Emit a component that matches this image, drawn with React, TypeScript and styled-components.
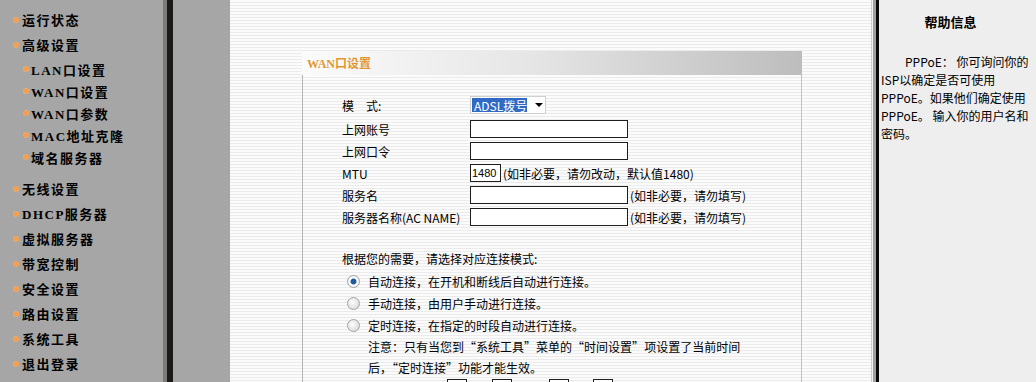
import React from 'react';
import styled, { createGlobalStyle } from 'styled-components';

const GlobalStyle = createGlobalStyle`
  html, body {
    margin: 0;
    padding: 0;
  }
  body {
    width: 1036px;
    height: 382px;
    overflow: hidden;
    background: #a6a6a6;
    font-family: "Noto Sans CJK SC", sans-serif;
    color: #000;
  }
`;

const Page = styled.div`
  display: flex;
  height: 382px;
  overflow: hidden;
`;

/* 左侧菜单 */
const Sidebar = styled.nav`
  width: 163px;
  flex: none;
  background: #a6a6a6;
  padding-top: 7px;
  box-sizing: border-box;
`;

const MenuItem = styled.div<{ $sub?: boolean }>`
  display: flex;
  align-items: center;
  height: ${(p) => (p.$sub ? 22 : 25)}px;
  padding-left: ${(p) => (p.$sub ? 23 : 13)}px;
  font: bold 13px "Liberation Serif", "Noto Sans CJK SC", serif;
  letter-spacing: 1.5px;
  white-space: nowrap;
`;

const Bullet = styled.span<{ $sub?: boolean }>`
  flex: none;
  width: 6px;
  height: 6px;
  border-radius: 50%;
  background: radial-gradient(circle, #f59d4a 35%, #e9b489 100%);
  margin-right: ${(p) => (p.$sub ? 2 : 3)}px;
`;

const SubGroup = styled.div`
  padding: 1px 0 8px;
`;

const SideDivider = styled.div`
  width: 10px;
  flex: none;
  background: linear-gradient(to right, #7b7b7b 0 4px, #1b1917 4px 10px);
`;

const Gutter = styled.div`
  width: 57px;
  flex: none;
  background: #a6a6a6;
`;

/* 中间主体 */
const Main = styled.main`
  flex: 1;
  background: repeating-linear-gradient(to bottom, #fbfbfb 0 2px, #ebebeb 2px 3px);
  padding: 51px 0 0 72px;
  box-sizing: border-box;
`;

const Panel = styled.section`
  width: 500px;
`;

const PanelHeader = styled.div`
  height: 24px;
  display: flex;
  align-items: center;
  padding-left: 5px;
  background: linear-gradient(to right, #fbfbfb 0%, #e6e6e6 45%, #bdbdbd 100%);
  color: #e3962f;
  font: bold 12px "Liberation Serif", "Noto Sans CJK SC", serif;
`;

const PanelBody = styled.div`
  border-left: 1px solid #b5b5b5;
  border-right: 1px solid #c2c2c2;
  padding: 17px 0 40px 39px;
  font-size: 12px;
`;

const FormGrid = styled.div`
  display: grid;
  grid-template-columns: 128px auto;
  grid-template-rows: 26px repeat(5, 22px);
  align-items: center;
`;

const Label = styled.span`
  font-size: 12px;
`;

const Field = styled.div`
  display: flex;
  align-items: center;
  gap: 2px;
  white-space: nowrap;
`;

const TextInput = styled.input<{ $w?: number }>`
  width: ${(p) => p.$w ?? 158}px;
  height: 18px;
  box-sizing: border-box;
  margin: 0;
  padding: 0 1px;
  border: 1px solid #1e1e1e;
  background: #fff;
  font: 11px "Liberation Sans", sans-serif;
  outline: none;
`;

const Select = styled.div`
  flex: none;
  display: flex;
  align-items: center;
  width: 76px;
  height: 18px;
  box-sizing: border-box;
  padding: 1px;
  border: 1px solid #d0d0d0;
  background: #fff;
`;

const SelectValue = styled.span`
  height: 100%;
  width: 55px;
  flex: none;
  box-sizing: border-box;
  padding: 0 2px;
  background: #316ac5;
  color: #fff;
  font-size: 12px;
  line-height: 15px;
`;

const SelectArrow = styled.span`
  margin-left: 8px;
  width: 0;
  height: 0;
  border-left: 4px solid transparent;
  border-right: 4px solid transparent;
  border-top: 4px solid #000;
`;

const Hint = styled.span`
  font-size: 12px;
`;

const Prompt = styled.div`
  margin-top: 20px;
  line-height: 22px;
`;

const RadioRow = styled.label`
  display: flex;
  align-items: center;
  height: 22px;
  padding-left: 5px;
  gap: 8px;
`;

const Radio = styled.span<{ $checked?: boolean }>`
  flex: none;
  width: 13px;
  height: 13px;
  box-sizing: border-box;
  border-radius: 50%;
  border: 1px solid #a3a3a3;
  background: ${(p) =>
    p.$checked
      ? 'radial-gradient(circle, #1f5c9c 0 2.5px, #fff 3.5px 4px, #d4d4d4 100%)'
      : 'radial-gradient(circle at 40% 40%, #fdfdfd 0, #d2d2d2 100%)'};
`;

const Note = styled.div`
  padding-left: 26px;
  line-height: 21px;
  white-space: nowrap;
`;

const Quote = styled.span`
  font-feature-settings: "fwid";
`;

const TimeRow = styled.div`
  display: flex;
  align-items: flex-start;
  padding: 1px 0 0 26px;
  height: 20px;
`;

const TimeBox = styled.input<{ $gap: number }>`
  width: 20px;
  height: 18px;
  box-sizing: border-box;
  margin: 0 0 0 ${(p) => p.$gap}px;
  border: 1px solid #1e1e1e;
  background: #fff;
`;

const RightDivider = styled.div`
  width: 8px;
  flex: none;
  background: linear-gradient(to right, #cfcfcf 0 1px, #f3f3f3 1px 2px, #a0a0a0 2px 5px, #0c0c0c 5px 8px);
`;

/* 右侧帮助 */
const HelpPanel = styled.aside`
  width: 157px;
  flex: none;
  background: #eeeeee;
  padding: 13px 10px 0 2px;
  box-sizing: border-box;
`;

const HelpTitle = styled.div`
  text-align: center;
  font-weight: bold;
  font-size: 13px;
  line-height: 18px;
  padding-right: 6px;
`;

const HelpText = styled.p`
  margin: 22px 0 0;
  font-size: 12px;
  line-height: 18px;
  white-space: nowrap;
`;

const topMenu = ['运行状态', '高级设置'];
const subMenu = ['LAN口设置', 'WAN口设置', 'WAN口参数', 'MAC地址克隆', '域名服务器'];
const restMenu = ['无线设置', 'DHCP服务器', '虚拟服务器', '带宽控制', '安全设置', '路由设置', '系统工具', '退出登录'];

const modes = [
  { text: '自动连接，在开机和断线后自动进行连接。', checked: true },
  { text: '手动连接，由用户手动进行连接。', checked: false },
  { text: '定时连接，在指定的时段自动进行连接。', checked: false },
];

// 定时连接的时段输入框（下半部分在画面外）
const timeGaps = [79, 25, 37, 24];

const App = () => {
  return (
    <>
      <GlobalStyle />
      <Page>
        <Sidebar>
          {topMenu.map((item) => (
            <MenuItem key={item}>
              <Bullet />
              {item}
            </MenuItem>
          ))}
          <SubGroup>
            {subMenu.map((item) => (
              <MenuItem $sub key={item}>
                <Bullet $sub />
                {item}
              </MenuItem>
            ))}
          </SubGroup>
          {restMenu.map((item) => (
            <MenuItem key={item}>
              <Bullet />
              {item}
            </MenuItem>
          ))}
        </Sidebar>
        <SideDivider />
        <Gutter />

        <Main>
          <Panel>
            <PanelHeader>WAN口设置</PanelHeader>
            <PanelBody>
              <FormGrid>
                <Label>模{'\u3000'}式:</Label>
                <Field>
                  <Select>
                    <SelectValue>ADSL拨号</SelectValue>
                    <SelectArrow />
                  </Select>
                </Field>

                <Label>上网账号</Label>
                <Field>
                  <TextInput defaultValue="" />
                </Field>

                <Label>上网口令</Label>
                <Field>
                  <TextInput type="password" defaultValue="" />
                </Field>

                <Label>MTU</Label>
                <Field>
                  <TextInput $w={31} defaultValue="1480" />
                  <Hint>(如非必要，请勿改动，默认值1480)</Hint>
                </Field>

                <Label>服务名</Label>
                <Field>
                  <TextInput defaultValue="" />
                  <Hint>(如非必要，请勿填写)</Hint>
                </Field>

                <Label>服务器名称(AC NAME)</Label>
                <Field>
                  <TextInput defaultValue="" />
                  <Hint>(如非必要，请勿填写)</Hint>
                </Field>
              </FormGrid>

              <Prompt>根据您的需要，请选择对应连接模式:</Prompt>
              {modes.map((m) => (
                <RadioRow key={m.text}>
                  <Radio $checked={m.checked} />
                  {m.text}
                </RadioRow>
              ))}
              <Note>
                注意：只有当您到<Quote>“</Quote>系统工具<Quote>”</Quote>菜单的<Quote>“</Quote>时间设置<Quote>”</Quote>项设置了当前时间
                <br />
                后，<Quote>“</Quote>定时连接<Quote>”</Quote>功能才能生效。
              </Note>
              <TimeRow>
                {timeGaps.map((g, i) => (
                  <TimeBox key={i} $gap={g} defaultValue="" />
                ))}
              </TimeRow>
            </PanelBody>
          </Panel>
        </Main>

        <RightDivider />
        <HelpPanel>
          <HelpTitle>帮助信息</HelpTitle>
          <HelpText>
            {'\u3000\u3000'}PPPoE： 你可询问你的
            <br />
            ISP以确定是否可使用
            <br />
            PPPoE。如果他们确定使用
            <br />
            PPPoE。 输入你的用户名和
            <br />
            密码。
          </HelpText>
        </HelpPanel>
      </Page>
    </>
  );
};

export default App;
